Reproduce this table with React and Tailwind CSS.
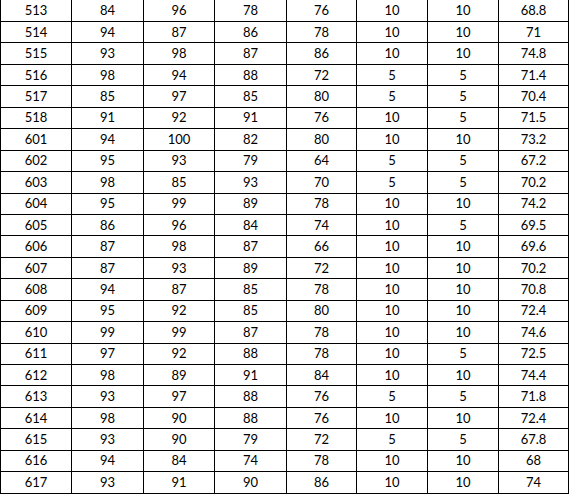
const rows = [
  ['513', '84', '96', '78', '76', '10', '10', '68.8'],
  ['514', '94', '87', '86', '78', '10', '10', '71'],
  ['515', '93', '98', '87', '86', '10', '10', '74.8'],
  ['516', '98', '94', '88', '72', '5', '5', '71.4'],
  ['517', '85', '97', '85', '80', '5', '5', '70.4'],
  ['518', '91', '92', '91', '76', '10', '5', '71.5'],
  ['601', '94', '100', '82', '80', '10', '10', '73.2'],
  ['602', '95', '93', '79', '64', '5', '5', '67.2'],
  ['603', '98', '85', '93', '70', '5', '5', '70.2'],
  ['604', '95', '99', '89', '78', '10', '10', '74.2'],
  ['605', '86', '96', '84', '74', '10', '5', '69.5'],
  ['606', '87', '98', '87', '66', '10', '10', '69.6'],
  ['607', '87', '93', '89', '72', '10', '10', '70.2'],
  ['608', '94', '87', '85', '78', '10', '10', '70.8'],
  ['609', '95', '92', '85', '80', '10', '10', '72.4'],
  ['610', '99', '99', '87', '78', '10', '10', '74.6'],
  ['611', '97', '92', '88', '78', '10', '5', '72.5'],
  ['612', '98', '89', '91', '84', '10', '10', '74.4'],
  ['613', '93', '97', '88', '76', '5', '5', '71.8'],
  ['614', '98', '90', '88', '76', '10', '10', '72.4'],
  ['615', '93', '90', '79', '72', '5', '5', '67.8'],
  ['616', '94', '84', '74', '78', '10', '10', '68'],
  ['617', '93', '91', '90', '86', '10', '10', '74'],
];

export default function App() {
  return (
    <div className="h-[495px] w-[570px] overflow-hidden bg-white font-['Lato',sans-serif] text-[13px] text-black">
      <div className="w-[569px] border-l border-black">
        {rows.map((row, rowIndex) => (
          <div
            key={row[0]}
            className={`grid grid-cols-[71px_72px_71px_72px_70px_71px_71px_70px] border-b border-black ${rowIndex === 0 ? 'h-[22px]' : 'h-[21.45px]'}`}
          >
            {row.map((cell, cellIndex) => (
              <div key={cellIndex} className="flex items-center justify-center border-r border-black leading-none">
                {cell}
              </div>
            ))}
          </div>
        ))}
      </div>
    </div>
  );
}
